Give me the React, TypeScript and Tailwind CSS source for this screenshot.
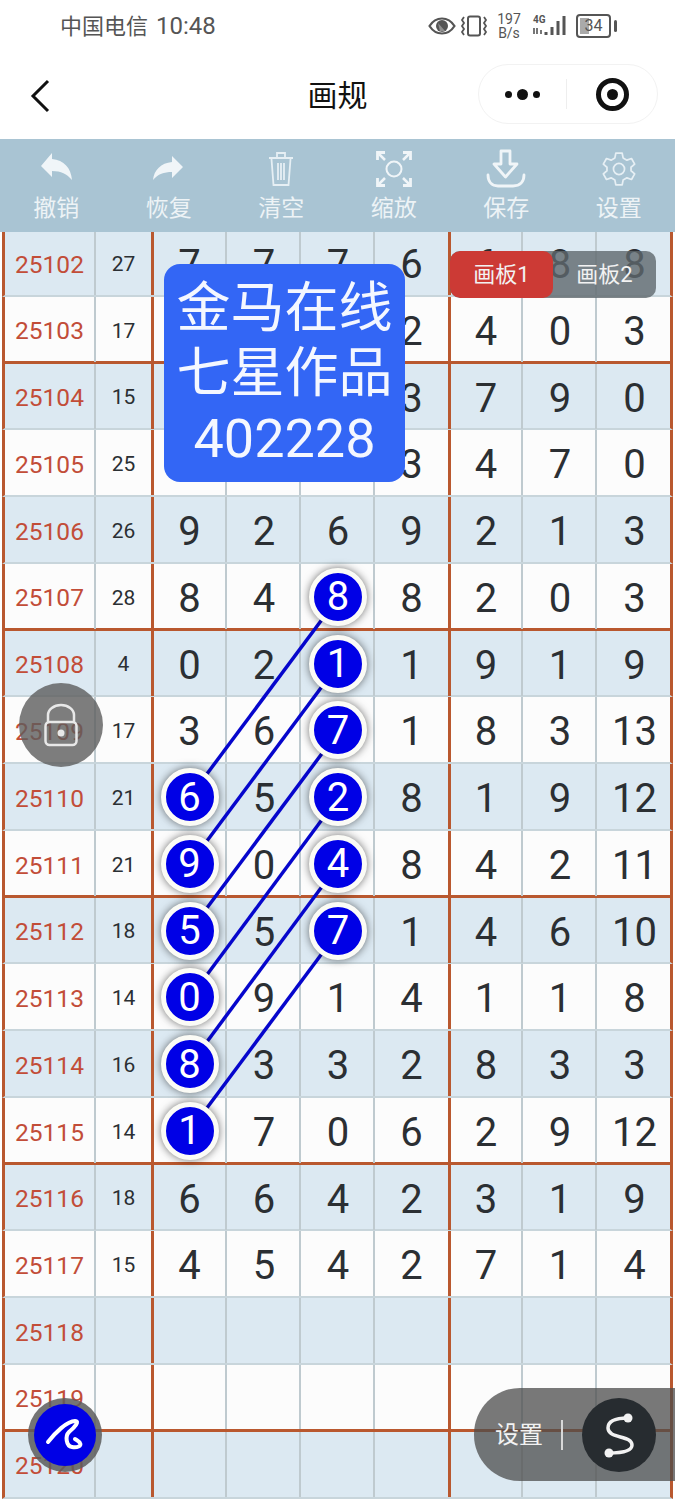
import { ReactNode } from "react";

type Row = { id: string; sum: string; cells: string[]; hot?: number[] };

const rows: Row[] = [
  { id: "25102", sum: "27", cells: ["7", "7", "7", "6", "6", "8", "8"] },
  { id: "25103", sum: "17", cells: ["", "", "", "2", "4", "0", "3"] },
  { id: "25104", sum: "15", cells: ["", "", "", "3", "7", "9", "0"] },
  { id: "25105", sum: "25", cells: ["", "", "", "3", "4", "7", "0"] },
  { id: "25106", sum: "26", cells: ["9", "2", "6", "9", "2", "1", "3"] },
  { id: "25107", sum: "28", cells: ["8", "4", "8", "8", "2", "0", "3"], hot: [2] },
  { id: "25108", sum: "4", cells: ["0", "2", "1", "1", "9", "1", "9"], hot: [2] },
  { id: "25109", sum: "17", cells: ["3", "6", "7", "1", "8", "3", "13"], hot: [2] },
  { id: "25110", sum: "21", cells: ["6", "5", "2", "8", "1", "9", "12"], hot: [0, 2] },
  { id: "25111", sum: "21", cells: ["9", "0", "4", "8", "4", "2", "11"], hot: [0, 2] },
  { id: "25112", sum: "18", cells: ["5", "5", "7", "1", "4", "6", "10"], hot: [0, 2] },
  { id: "25113", sum: "14", cells: ["0", "9", "1", "4", "1", "1", "8"], hot: [0] },
  { id: "25114", sum: "16", cells: ["8", "3", "3", "2", "8", "3", "3"], hot: [0] },
  { id: "25115", sum: "14", cells: ["1", "7", "0", "6", "2", "9", "12"], hot: [0] },
  { id: "25116", sum: "18", cells: ["6", "6", "4", "2", "3", "1", "9"] },
  { id: "25117", sum: "15", cells: ["4", "5", "4", "2", "7", "1", "4"] },
  { id: "25118", sum: "", cells: ["", "", "", "", "", "", ""] },
  { id: "25119", sum: "", cells: ["", "", "", "", "", "", ""] },
  { id: "25120", sum: "", cells: ["", "", "", "", "", "", ""] },
];

// pairs of circles joined by a line, in table pixels
const links = [
  [338, 368, 189, 568],
  [338, 435, 189, 635],
  [338, 502, 189, 702],
  [338, 568, 189, 769],
  [338, 635, 189, 836],
  [338, 702, 189, 902],
];

const cjk = "font-['Roboto','Noto_Sans_CJK_SC',sans-serif]";

function ToolItem({ icon, label }: { icon: ReactNode; label: string }) {
  return (
    <div className="flex flex-col items-center">
      <div className="flex h-[48px] w-[50px] items-center justify-center">{icon}</div>
      <span className="mt-[1px] text-[23px] leading-[30px] text-[#edf3f6]">{label}</span>
    </div>
  );
}

function StatusIcons() {
  return (
    <div className="flex items-center text-[#555]">
      <svg width="28" height="20" viewBox="0 0 28 20" className="mr-[4px] ml-[2px]">
        <path d="M1.5 10C5 4.5 9 2.5 14 2.5S23 4.5 26.500 10C23 15.500 19 17.500 14 17.500S5 15.500 1.500 10Z" fill="none" stroke="#555" strokeWidth="2.200" />
        <circle cx="14" cy="10" r="6" fill="#555" />
        <path d="M10 7l7 8-5 .5z" fill="#fff" opacity=".35" />
      </svg>
      <svg width="28" height="24" viewBox="0 0 28 24" className="mr-[8px]">
        <rect x="8" y="2.500" width="12" height="19" rx="2" fill="none" stroke="#555" strokeWidth="2" />
        <path d="M4 3l-2 3 2 3-2 3 2 3-2 3 2 3M24 3l2 3-2 3 2 3-2 3 2 3-2 3" fill="none" stroke="#555" strokeWidth="1.800" />
      </svg>
      <div className="mr-[10px] flex w-[26px] flex-col items-center text-[14px] leading-[14px] font-['Roboto',sans-serif]">
        <span>197</span>
        <span>B/s</span>
      </div>
      <svg width="36" height="24" viewBox="0 0 36 24" className="mr-[8px]">
        <text x="1" y="9" fontSize="10" fontWeight="700" fill="#555" fontFamily="Roboto">4G</text>
        <path d="M2 14v6M5 20v-6M9 16v4" stroke="#555" strokeWidth="1.600" />
        <path d="M14 18v3M20 13v8M26 7v14M32 2v19" stroke="#555" strokeWidth="3" />
      </svg>
      <div className="relative flex h-[24px] w-[35px] items-center justify-center rounded-[4px] border-[2px] border-[#555] text-[16px] font-['Roboto',sans-serif]">
        <div className="absolute top-[2px] bottom-[2px] left-[2px] w-[9px] bg-[#aaa]" />
        <span className="relative">34</span>
      </div>
      <div className="ml-[3px] h-[12px] w-[3px] rounded-full bg-[#555]" />
    </div>
  );
}

function Cell({ value, hot, brown, last, nudge }: { value: string; hot?: boolean; brown?: boolean; last?: boolean; nudge?: boolean }) {
  return (
    <div
      className={`flex items-center justify-center pt-[5px] text-[40px] text-[#2b2f33] ${
        brown ? "border-l-[3px] border-l-[#b9582f]" : ""
      } ${last ? "" : "border-r-[2px] border-r-[#bfcacf]"} ${nudge ? "pl-[2px]" : ""}`}
    >
      {hot ? (
        <div className="relative z-10 -mt-[4px] flex h-[58px] w-[58px] items-center justify-center rounded-full border-[5px] border-[#fbfbf6] bg-[#0000e6] pt-[1px] text-[40px] text-white shadow-[0_0_8px_rgba(0,0,0,0.55)]">
          {value}
        </div>
      ) : (
        value
      )}
    </div>
  );
}

function TableRow({ row, index }: { row: Row; index: number }) {
  // every fourth row closes a group with a brown rule
  const closes = index % 4 === 1;
  const tint = index % 2 === 0 ? "bg-[#dce9f2]" : "bg-[#fcfcfc]";
  return (
    <div
      className={`mx-[2px] grid h-[66.77px] grid-cols-[91px_55px_76px_74px_74px_73px_75px_74px_73px] border-r-[3px] border-l-[3px] border-r-[#b9582f] border-l-[#b9582f] ${tint} ${
        closes ? "border-b-[3px] border-b-[#b9582f]" : "border-b-[2px] border-b-[#c8d5db]"
      }`}
    >
      <div className="flex items-center justify-center border-r-[2px] border-r-[#bfcacf] pt-[5px] text-[24.500px] text-[#c24d38]">
        {row.id}
      </div>
      <div className="flex items-center justify-center pt-[4px] text-[21px] text-[#2b2f33]">{row.sum}</div>
      {row.cells.map((c, i) => (
        <Cell
          key={i}
          value={c}
          hot={row.hot?.includes(i)}
          brown={i === 0 || i === 4}
          last={i === 3 || i === 6}
          nudge={i === 1 || i === 2 || i === 5 || i === 6}
        />
      ))}
    </div>
  );
}

export default function App() {
  return (
    <div className={`relative h-[1500px] w-[675px] overflow-hidden bg-white ${cjk}`}>
      {/* status bar */}
      <div className="flex h-[52px] items-center justify-between pr-[58px] pl-[60px]">
        <span className="flex items-center gap-[8px] text-[#555]">
          <span className="text-[22px]">中国电信</span>
          <span className="text-[24px]">10:48</span>
        </span>
        <StatusIcons />
      </div>

      {/* title bar */}
      <div className="relative flex h-[87px] items-center justify-between pr-[17px] pl-[28px]">
        <svg width="24" height="36" viewBox="0 0 24 36">
          <path d="M20 3L5 18l15 15" fill="none" stroke="#111" strokeWidth="3" />
        </svg>
        <span className="absolute right-0 left-0 text-center text-[30px] leading-[40px] text-[#111]">画规</span>
        <div className="-mt-[3px] flex h-[60px] w-[180px] items-center rounded-full border border-[#f2f2f2] bg-white">
          <div className="flex flex-1 items-center justify-center gap-[5px]">
            <div className="h-[7px] w-[7px] rounded-full bg-[#111]" />
            <div className="h-[11px] w-[11px] rounded-full bg-[#111]" />
            <div className="h-[7px] w-[7px] rounded-full bg-[#111]" />
          </div>
          <div className="h-[30px] w-px bg-[#eee]" />
          <div className="flex w-[90px] items-center justify-center">
            <div className="flex h-[33px] w-[33px] items-center justify-center rounded-full border-[5px] border-[#111]">
              <div className="h-[11px] w-[11px] rounded-full bg-[#111]" />
            </div>
          </div>
        </div>
      </div>

      {/* toolbar */}
      <div className="relative z-10 grid h-[93px] grid-cols-6 bg-[#a9c4d3] pt-[6px]">
        <ToolItem
          label="撤销"
          icon={
            <svg width="36" height="36" viewBox="0 0 36 36">
              <path d="M3 15L14 2v6c12 1 19 9 20 21-5-6-11-9-20-9v6z" fill="#f0f5f8" />
            </svg>
          }
        />
        <ToolItem
          label="恢复"
          icon={
            <svg width="36" height="36" viewBox="0 0 36 36">
              <path d="M32 16L21 5v6C10 12 3 19 2 29c5-6 11-8 19-8v6z" fill="#f0f5f8" />
            </svg>
          }
        />
        <ToolItem
          label="清空"
          icon={
            <svg width="30" height="40" viewBox="0 0 30 40" fill="none" stroke="#e6eff4" strokeWidth="1.800">
              <path d="M3 9h24M11 8V4h8v4M5.500 10l2 26h15l2-26M12 14v17M15 14v17M18 14v17" />
            </svg>
          }
        />
        <ToolItem
          label="缩放"
          icon={
            <svg width="36" height="36" viewBox="0 0 36 36" fill="none" stroke="#f0f5f8" strokeWidth="2">
              <circle cx="18" cy="18" r="7.500" />
              <path d="M3 3l6 6M33 3l-6 6M3 33l6-6M33 33l-6-6" strokeWidth="2.500" />
              <path d="M1.500 9V1.500H9M27 1.500h7.500V9M1.500 27v7.500H9M27 34.500h7.500V27" strokeWidth="2.800" />
            </svg>
          }
        />
        <ToolItem
          label="保存"
          icon={
            <svg width="42" height="42" viewBox="0 0 42 42" fill="none" stroke="#f0f5f8" strokeWidth="2.800">
              <path d="M16 3h9v13h7L20.500 29 9 16h7z" strokeLinejoin="round" />
              <path d="M3 27c0 7 4 11 10 11h15c7 0 11-4 11-11" strokeLinecap="round" />
            </svg>
          }
        />
        <ToolItem
          label="设置"
          icon={
            <svg width="38" height="38" viewBox="0 0 24 24" fill="none" stroke="#e6eff4" strokeWidth="1.100">
              <path d="M10 2h4l.6 3 2.400 1.400 2.900-1 2 3.500-2.300 2v2.200l2.300 2-2 3.500-2.900-1-2.400 1.400-.6 3h-4l-.6-3L7 17.600l-2.900 1-2-3.500 2.300-2v-2.200l-2.300-2 2-3.500 2.900 1L9.400 5z" strokeLinejoin="round" />
              <circle cx="12" cy="12" r="3.500" />
            </svg>
          }
        />
      </div>

      {/* table */}
      <div className="relative -mt-[2px]">
        {rows.map((row, i) => (
          <TableRow key={row.id} row={row} index={i} />
        ))}

        <svg className="pointer-events-none absolute top-0 left-0" width="675" height="1270">
          {links.map((l, i) => (
            <line key={i} x1={l[0]} y1={l[1]} x2={l[2]} y2={l[3]} stroke="#0606cc" strokeWidth="3.500" />
          ))}
        </svg>

        {/* watermark card */}
        <div className="absolute top-[34px] left-[164px] z-20 flex h-[218px] w-[241px] flex-col items-center justify-center rounded-[16px] bg-[#3366f5] text-[54px] leading-[65px] text-[#f4f7ff]">
          <span>金马在线</span>
          <span>七星作品</span>
          <span>402228</span>
        </div>

        {/* board tabs */}
        <div className="absolute top-[21px] left-[450px] z-20 flex h-[47px] w-[206px] items-center overflow-hidden rounded-[10px] bg-[#5f686d]/80 text-[22px] text-[#f2f2f2]">
          <div className="flex h-full w-[103px] items-center justify-center rounded-[10px] bg-[#cc3a35]">画板1</div>
          <div className="flex flex-1 items-center justify-center">画板2</div>
        </div>

        {/* lock button */}
        <div className="absolute top-[453px] left-[19px] z-20 flex h-[84px] w-[84px] items-center justify-center rounded-full bg-[#5c5c5c]/80">
          <svg width="36" height="44" viewBox="0 0 36 44" fill="none" stroke="#e8e8e8" strokeWidth="2.500">
            <path d="M5 20v-8a13 10 0 0 1 26 0v8" />
            <rect x="2.500" y="19" width="31" height="23" rx="4" />
            <circle cx="18" cy="30" r="3.500" fill="#e8e8e8" stroke="none" />
          </svg>
        </div>

        {/* pen button */}
        <div className="absolute top-[1168px] left-[28px] z-20 flex h-[74px] w-[74px] items-center justify-center rounded-full bg-[#5c5c5c]/85">
          <div className="flex h-[62px] w-[62px] items-center justify-center rounded-full bg-[#0000e6]">
            <svg width="40" height="36" viewBox="0 0 40 36" fill="none" stroke="#fff" strokeWidth="4" strokeLinecap="round" strokeLinejoin="round">
              <path d="M3 25C10 16 22 4 30 4c5 0 0 6-6 11-4 4-3 14 3 15 5 1 10-1 8-4-1-2-4-3-5-4" />
            </svg>
          </div>
        </div>

        {/* settings pill */}
        <div className="absolute top-[1158px] right-0 z-20 flex h-[93px] w-[201px] items-center rounded-l-[46px] bg-[#4c4c4c]/75">
          <span className="ml-[21px] text-[24px] text-[#f2f2f2]">设置</span>
          <div className="mr-[19px] ml-[18px] h-[30px] w-[2px] bg-[#d8d8d8]" />
          <div className="flex h-[74px] w-[74px] items-center justify-center rounded-full bg-[#272c30]">
            <svg width="40" height="56" viewBox="0 0 40 56" fill="none" stroke="#f2f2f2" strokeWidth="3.500" strokeLinecap="round">
              <path d="M29 11C18 11 9 13 9 21c0 11 24 7 24 17 0 6-11 8-23 8" />
              <circle cx="29" cy="11" r="4.500" fill="#f2f2f2" stroke="none" />
              <circle cx="10" cy="46" r="4.500" fill="#f2f2f2" stroke="none" />
            </svg>
          </div>
        </div>
      </div>
    </div>
  );
}
